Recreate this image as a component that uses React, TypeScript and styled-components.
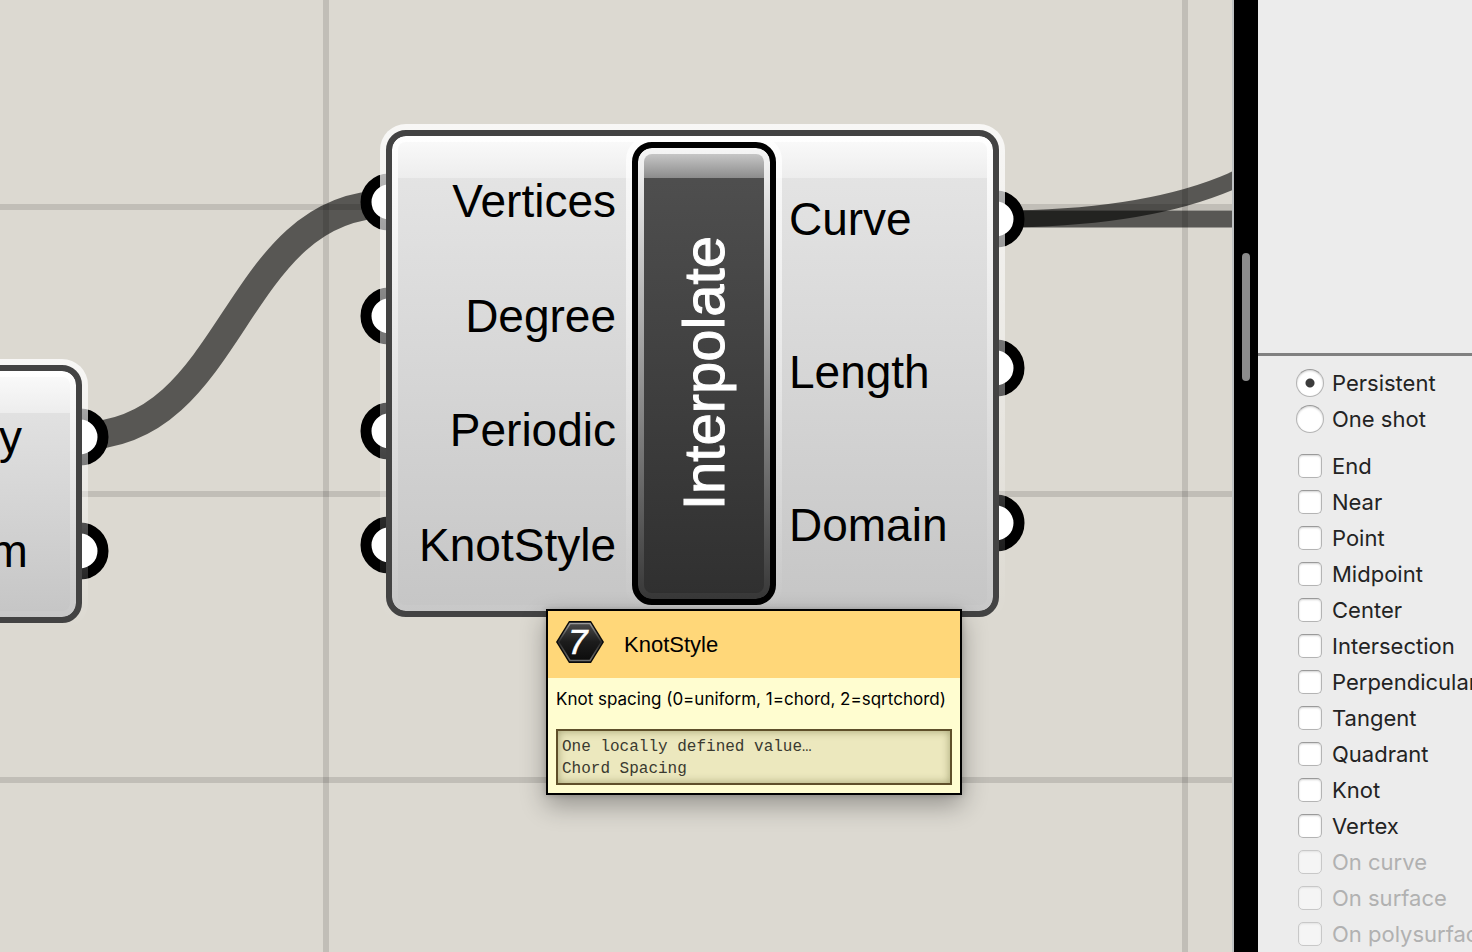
import React from 'react';
import styled, { createGlobalStyle } from 'styled-components';

const GlobalStyle = createGlobalStyle`
  *, *::before, *::after { box-sizing: border-box; }
  body { margin: 0; background: #ececec; overflow: hidden; }
`;

const Workspace = styled.div`
  display: flex;
  height: 100vh;
  overflow: hidden;
  font-family: 'Liberation Sans', Arial, sans-serif;
  color: #000;
`;

const Canvas = styled.main`
  position: relative;
  flex: 1;
  min-width: 0;
  overflow: hidden;
  background: #dcd9d1;
  border-right: 2px solid #bfc2c3;
`;

const Drawing = styled.svg`
  position: absolute;
  inset: 0;
  width: 100%;
  height: 100%;
`;

const Node = styled.section<{ $x: number; $y: number; $width: number; $height: number }>`
  position: absolute;
  left: ${(p) => p.$x}px;
  top: ${(p) => p.$y}px;
  width: ${(p) => p.$width}px;
  height: ${(p) => p.$height}px;
  padding: 6px;
  border-radius: 26px;
  background: linear-gradient(rgba(255, 255, 255, 0.8), rgba(255, 255, 255, 0));
`;

const Frame = styled.div<{ $columns: string }>`
  position: relative;
  display: grid;
  grid-template-columns: ${(p) => p.$columns};
  height: 100%;
  border: 6px solid #434343;
  border-radius: 20px;
  background: linear-gradient(#fff, #c8c8c8) padding-box, #434343;
  &::before {
    content: '';
    position: absolute;
    inset: 6px;
    border-radius: 8px;
    background:
      linear-gradient(#f9f9f9, #ededed) top / 100% 36px no-repeat,
      linear-gradient(#e6e6e6, #c6c6c6);
  }
`;

const PortList = styled.ul<{ $side: 'in' | 'out'; $padding: string }>`
  position: relative;
  display: flex;
  flex-direction: column;
  margin: 0;
  padding: ${(p) => p.$padding};
  list-style: none;
  text-align: ${(p) => (p.$side === 'in' ? 'right' : 'left')};
`;

const PortLabel = styled.li`
  flex: 1;
  display: grid;
  align-items: center;
  font-size: 46px;
  line-height: 52px;
  white-space: nowrap;
`;

const CoreHalo = styled.div`
  position: relative;
  height: 475px;
  padding: 6px;
  border-radius: 24px;
  background: linear-gradient(rgba(255, 255, 255, 0.8), rgba(255, 255, 255, 0));
`;

const Core = styled.div`
  height: 463px;
  padding: 6px;
  border: 6px solid #000;
  border-radius: 20px;
  background: linear-gradient(#f6f6f6, #383838) padding-box, #000;
`;

const CoreFace = styled.div`
  display: flex;
  align-items: center;
  justify-content: center;
  height: 100%;
  border-radius: 8px;
  background:
    linear-gradient(#c6c6c6, #8c8c8c) top / 100% 24px no-repeat,
    linear-gradient(#505050, #303030);
`;

const CoreName = styled.h1`
  margin: 0;
  color: #fff;
  font-size: 58px;
  font-weight: 400;
  line-height: 64px;
  writing-mode: vertical-rl;
  transform: rotate(180deg);
  -webkit-text-stroke: 1px #fff;
`;

const Tooltip = styled.aside`
  position: absolute;
  left: 546px;
  top: 609px;
  width: 416px;
  border: 2px solid #000;
  background: #fffdd0;
  box-shadow: 0 10px 24px rgba(0, 0, 0, 0.32), 0 0 6px rgba(0, 0, 0, 0.2);
`;

const TooltipHeader = styled.header`
  display: flex;
  align-items: center;
  gap: 20px;
  height: 67px;
  padding: 0 8px 6px;
  background: #ffd779;
`;

const TooltipTitle = styled.h2`
  margin: 6px 0 0;
  font-size: 22px;
  font-weight: 400;
  line-height: 26px;
`;

const TooltipBody = styled.div`
  padding: 9px 8px 8px;
`;

const Description = styled.p`
  margin: 0 0 18px;
  font-family: Inter, sans-serif;
  font-size: 17px;
  line-height: 24px;
  white-space: nowrap;
`;

const ValueBox = styled.pre`
  margin: 0;
  padding: 5px 4px 3px;
  border: 2px solid #5f4f2a;
  background: #ece8be;
  box-shadow: inset 0 0 8px rgba(90, 90, 40, 0.5);
  color: #3a3a30;
  font-family: 'Liberation Mono', monospace;
  font-size: 16px;
  line-height: 22px;
`;

const Splitter = styled.div`
  flex: none;
  width: 24px;
  padding: 253px 8px 0;
  background: #000;
`;

const Grip = styled.div`
  height: 128px;
  border-radius: 4px;
  background: #8c8c8c;
`;

const Panel = styled.aside`
  flex: none;
  display: flex;
  flex-direction: column;
  width: 214px;
  overflow: hidden;
  background: #ececec;
`;

const Viewport = styled.div`
  flex: none;
  height: 356px;
  border-bottom: 3px solid #808080;
`;

const Group = styled.fieldset`
  margin: 0;
  padding: 9px 0 2px 40px;
  border: 0;
`;

const Option = styled.label<{ $disabled?: boolean }>`
  display: flex;
  align-items: center;
  gap: 10px;
  height: 36px;
  color: ${(p) => (p.$disabled ? '#b1b1b1' : '#232323')};
  font-family: Inter, sans-serif;
  font-size: 22px;
  line-height: 28px;
  white-space: nowrap;
`;

const Radio = styled.input`
  appearance: none;
  flex: none;
  width: 28px;
  height: 28px;
  margin: 0 -2px;
  border: 1px solid #b4b4b4;
  border-top-color: #9a9a9a;
  border-radius: 50%;
  background: #fff;
  box-shadow: inset 0 1px 2px rgba(0, 0, 0, 0.18);
  &:checked {
    background: radial-gradient(circle, #3c3c3c 0 4px, #fff 5px);
  }
`;

const Checkbox = styled.input`
  appearance: none;
  flex: none;
  width: 24px;
  height: 24px;
  margin: 0;
  border: 1px solid #b4b4b4;
  border-top-color: #9a9a9a;
  border-radius: 5px;
  background: #fff;
  box-shadow: inset 0 1px 2px rgba(0, 0, 0, 0.18);
  &:disabled {
    border-color: #c8c8c8;
    background: #f5f5f5;
    box-shadow: inset 0 1px 2px rgba(0, 0, 0, 0.08);
  }
`;

const gridX = [323, 1182];
const gridY = [204, 491, 777];

const ports = [
  [80, 437], [80, 551],
  [389, 202], [389, 316], [389, 431], [389, 545],
  [996, 219], [996, 368], [996, 523],
];

const snaps = ['End', 'Near', 'Point', 'Midpoint', 'Center', 'Intersection', 'Perpendicular', 'Tangent', 'Quadrant', 'Knot', 'Vertex'];
const disabledSnaps = ['On curve', 'On surface', 'On polysurface'];

const KnotIcon = () => (
  <svg width="48" height="44" viewBox="0 0 48 44" aria-hidden="true">
    <defs>
      <linearGradient id="hex" x1="0" y1="0" x2="0" y2="1">
        <stop offset="0" stopColor="#4a4a4a" />
        <stop offset="0.5" stopColor="#1c1c1c" />
        <stop offset="1" stopColor="#0c0c0c" />
      </linearGradient>
      <linearGradient id="rim" x1="0" y1="0" x2="0" y2="1">
        <stop offset="0" stopColor="#9a9a9a" />
        <stop offset="0.5" stopColor="#2c2c2c" />
        <stop offset="1" stopColor="#6c6c6c" />
      </linearGradient>
    </defs>
    <path d="M13 1H35L48 22L35 43H13L0 22Z" fill="#0a0a0a" />
    <path d="M14 3.500H34L45.500 22L34 40.500H14L2.500 22Z" fill="url(#hex)" stroke="url(#rim)" strokeWidth="1.500" />
    <text x="12" y="34" fill="#fff" stroke="#fff" strokeWidth="0.6" fontFamily="'Liberation Sans', sans-serif" fontSize="35" fontStyle="italic">7</text>
  </svg>
);

export default function App() {
  return (
    <>
      <GlobalStyle />
      <Workspace>
        <Canvas>
          <Drawing aria-hidden="true">
            <g fill="#000" fillOpacity="0.12">
              {gridX.map((x) => <rect key={x} x={x} y="0" width="6" height="100%" />)}
              {gridY.map((y) => <rect key={y} x="0" y={y} width="100%" height="6" />)}
            </g>
            <g fill="none" stroke="#000" strokeOpacity="0.6">
              <path d="M80 436C236 436 232 204 389 204" strokeWidth="28" />
              <path d="M996 219H1800" strokeWidth="17" />
              <path d="M996 219C1090 219 1170 208 1232 181L1300 148" strokeWidth="17" />
            </g>
            <g fill="#fff" stroke="#000" strokeWidth="11">
              {ports.map(([x, y]) => <circle key={`${x}-${y}`} cx={x} cy={y} r="23" />)}
            </g>
          </Drawing>

          <Node $x={-212} $y={359} $width={300} $height={270}>
            <Frame $columns="1fr">
              <PortList $side="out" $padding="9px 0 9px 20px">
                <PortLabel>Geometry</PortLabel>
                <PortLabel>Transform</PortLabel>
              </PortList>
            </Frame>
          </Node>

          <Node $x={380} $y={124} $width={625} $height={499}>
            <Frame $columns="234px 156px 1fr">
              <PortList $side="in" $padding="8px 10px 9px 0">
                <PortLabel>Vertices</PortLabel>
                <PortLabel>Degree</PortLabel>
                <PortLabel>Periodic</PortLabel>
                <PortLabel>KnotStyle</PortLabel>
              </PortList>
              <CoreHalo>
                <Core>
                  <CoreFace>
                    <CoreName>Interpolate</CoreName>
                  </CoreFace>
                </Core>
              </CoreHalo>
              <PortList $side="out" $padding="6px 0 10px 7px">
                <PortLabel>Curve</PortLabel>
                <PortLabel>Length</PortLabel>
                <PortLabel>Domain</PortLabel>
              </PortList>
            </Frame>
          </Node>

          <Tooltip role="tooltip">
            <TooltipHeader>
              <KnotIcon />
              <TooltipTitle>KnotStyle</TooltipTitle>
            </TooltipHeader>
            <TooltipBody>
              <Description>Knot spacing (0=uniform, 1=chord, 2=sqrtchord)</Description>
              <ValueBox>{'One locally defined value…\nChord Spacing'}</ValueBox>
            </TooltipBody>
          </Tooltip>
        </Canvas>

        <Splitter>
          <Grip />
        </Splitter>

        <Panel>
          <Viewport />
          <Group aria-label="Snap duration">
            <Option><Radio type="radio" name="duration" defaultChecked />Persistent</Option>
            <Option><Radio type="radio" name="duration" />One shot</Option>
          </Group>
          <Group aria-label="Object snaps">
            {snaps.map((name) => (
              <Option key={name}><Checkbox type="checkbox" />{name}</Option>
            ))}
            {disabledSnaps.map((name) => (
              <Option key={name} $disabled><Checkbox type="checkbox" disabled />{name}</Option>
            ))}
          </Group>
        </Panel>
      </Workspace>
    </>
  );
}
